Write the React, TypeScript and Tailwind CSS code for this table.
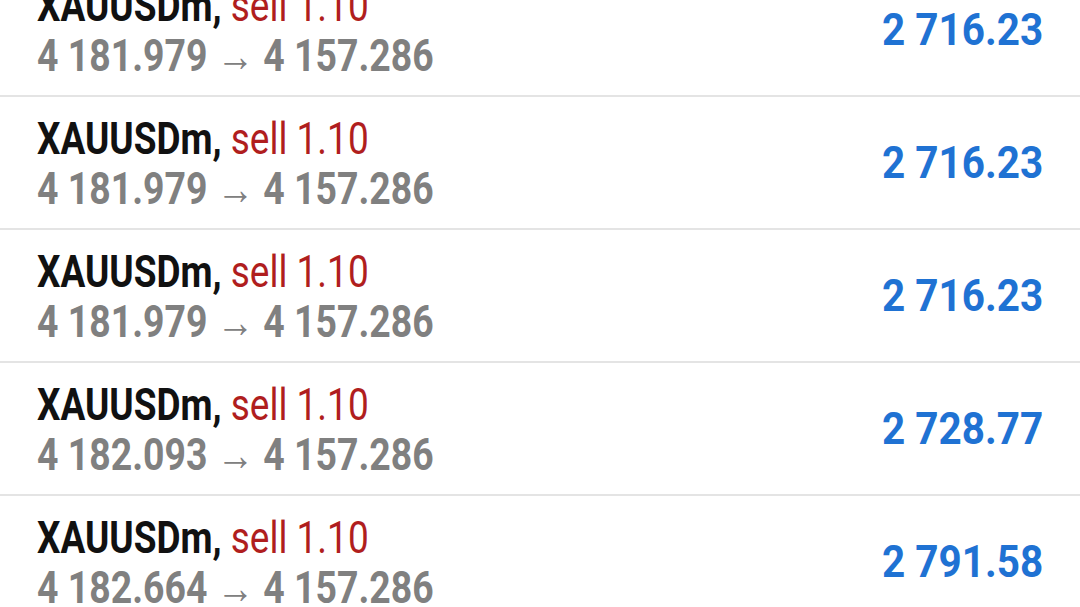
const trades = [
  { open: '4 181.979', close: '4 157.286', profit: '2 716.23' },
  { open: '4 181.979', close: '4 157.286', profit: '2 716.23' },
  { open: '4 181.979', close: '4 157.286', profit: '2 716.23' },
  { open: '4 182.093', close: '4 157.286', profit: '2 728.77' },
  { open: '4 182.664', close: '4 157.286', profit: '2 791.58' },
];

function TradeRow({ open, close, profit }: { open: string; close: string; profit: string }) {
  return (
    <div className="flex h-[133px] items-start justify-between border-b-2 border-[#e4e4e4] pl-[37px] pr-[37px] pt-[17px]">
      <div className="whitespace-nowrap text-[44px] leading-[50px]">
        <div className="origin-left scale-x-[0.84]">
          <span className="font-bold text-[#111111]">XAUUSDm,</span>{' '}
          <span className="text-[#b01e1e]">sell 1.10</span>
        </div>
        <div className="origin-left scale-x-[0.85] font-bold text-[#808080]">
          {open} <span className="font-normal">→</span> {close}
        </div>
      </div>
      <div className="flex h-full items-center pb-[17px]">
        <div className="origin-right scale-x-[0.92] whitespace-nowrap text-[44px] font-bold leading-[50px] text-[#1f72d3]">
          {profit}
        </div>
      </div>
    </div>
  );
}

export default function App() {
  return (
    <div className="h-[607px] w-[1080px] overflow-hidden bg-white font-['Roboto',sans-serif]">
      <div className="-mt-[36px]">
        {trades.map((t, i) => (
          <TradeRow key={i} {...t} />
        ))}
      </div>
    </div>
  );
}
